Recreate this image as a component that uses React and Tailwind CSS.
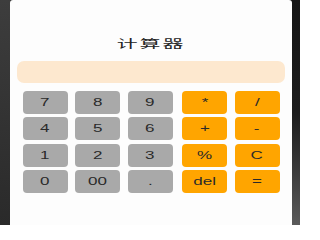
const rows = [
  ["7", "8", "9", "*", "/"],
  ["4", "5", "6", "+", "-"],
  ["1", "2", "3", "%", "C"],
  ["0", "00", ".", "del", "="],
];

function Key({ label, op, first }) {
  return (
    <button
      className={`flex h-[23px] w-[45px] items-center justify-center rounded-[4px] text-[10px] text-[#2a2a2a] ${
        op ? "bg-[#ffa500]" : "bg-[#a9a9a9]"
      } ${first ? "ml-[2px]" : ""}`}
    >
      <span className="inline-block scale-x-[1.7]">{label}</span>
    </button>
  );
}

export default function App() {
  return (
    <div className="flex h-[225px] w-[300px] bg-gradient-to-r from-[#2e2e2e] via-[#1f1f1f] to-[#141414] font-['Liberation_Sans',Arial,sans-serif]">
      <div className="h-full w-[10px] bg-gradient-to-b from-[#3d3d3d] to-[#2a2a2a]" />
      <div className="flex h-full w-[282px] flex-col items-center rounded-t-[3px] bg-[#fdfdfd] pt-[35px]">
        <h1 className="h-[16px] text-[11px] leading-[16px] text-[#222] font-['Noto_Sans_CJK_SC',sans-serif]">
          <span className="inline-block scale-x-[1.9] tracking-[1px]">计算器</span>
        </h1>
        <div className="mt-[10px] h-[22px] w-[268px] rounded-[7px] bg-[#fde8cf]" />
        <div className="mt-[8px] flex flex-col gap-[3.3px] pl-[0px]">
          {rows.map((row, r) => (
            <div key={r} className="flex gap-[7.5px]">
              {row.map((k, i) => (
                <Key key={k} label={k} op={i > 2} first={i === 3} />
              ))}
            </div>
          ))}
        </div>
      </div>
      <div className="h-full w-[8px] bg-gradient-to-b from-[#161616] via-[#1c1c1c] to-[#5a5a5a]" />
    </div>
  );
}
